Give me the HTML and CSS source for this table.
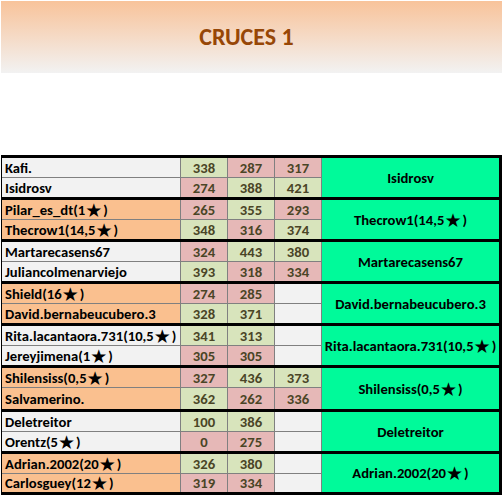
FILE: index.html
```html
<!DOCTYPE html>
<html>
<head>
<meta charset="utf-8">
<link rel="stylesheet" href="styles.css">
</head>
<body>
<div class="header"><h1 class="title">CRUCES 1</h1></div>
<div class="tbl">
  <div class="pair">
    <div class="name gray">Kafi.</div><div class="n g">338</div><div class="n p">287</div><div class="n p">317</div>
    <div class="win">Isidrosv</div>
    <div class="name gray">Isidrosv</div><div class="n p">274</div><div class="n g">388</div><div class="n g">421</div>
  </div>
  <div class="pair">
    <div class="name orange">Pilar_es_dt(1<span class="star">★</span>)</div><div class="n p">265</div><div class="n g">355</div><div class="n p">293</div>
    <div class="win">Thecrow1(14,5<span class="star">★</span>)</div>
    <div class="name orange">Thecrow1(14,5<span class="star">★</span>)</div><div class="n g">348</div><div class="n p">316</div><div class="n g">374</div>
  </div>
  <div class="pair">
    <div class="name gray">Martarecasens67</div><div class="n p">324</div><div class="n g">443</div><div class="n g">380</div>
    <div class="win">Martarecasens67</div>
    <div class="name gray">Juliancolmenarviejo</div><div class="n g">393</div><div class="n p">318</div><div class="n p">334</div>
  </div>
  <div class="pair">
    <div class="name orange">Shield(16<span class="star">★</span>)</div><div class="n p">274</div><div class="n p">285</div><div class="n e"></div>
    <div class="win">David.bernabeucubero.3</div>
    <div class="name orange">David.bernabeucubero.3</div><div class="n g">328</div><div class="n g">371</div><div class="n e"></div>
  </div>
  <div class="pair">
    <div class="name gray">Rita.lacantaora.731(10,5<span class="star">★</span>)</div><div class="n g">341</div><div class="n g">313</div><div class="n e"></div>
    <div class="win">Rita.lacantaora.731(10,5<span class="star">★</span>)</div>
    <div class="name gray">Jereyjimena(1<span class="star">★</span>)</div><div class="n p">305</div><div class="n p">305</div><div class="n e"></div>
  </div>
  <div class="pair tall">
    <div class="name orange">Shilensiss(0,5<span class="star">★</span>)</div><div class="n p">327</div><div class="n g">436</div><div class="n g">373</div>
    <div class="win">Shilensiss(0,5<span class="star">★</span>)</div>
    <div class="name orange">Salvamerino.</div><div class="n g">362</div><div class="n p">262</div><div class="n p">336</div>
  </div>
  <div class="pair">
    <div class="name gray">Deletreitor</div><div class="n g">100</div><div class="n g">386</div><div class="n e"></div>
    <div class="win">Deletreitor</div>
    <div class="name gray">Orentz(5<span class="star">★</span>)</div><div class="n p">0</div><div class="n p">275</div><div class="n e"></div>
  </div>
  <div class="pair short">
    <div class="name orange">Adrian.2002(20<span class="star">★</span>)</div><div class="n g">326</div><div class="n g">380</div><div class="n e"></div>
    <div class="win">Adrian.2002(20<span class="star">★</span>)</div>
    <div class="name orange">Carlosguey(12<span class="star">★</span>)</div><div class="n p">319</div><div class="n p">334</div><div class="n e"></div>
  </div>
</div>
</body>
</html>
```
FILE: styles.css
```css
html, body {
  margin: 0;
  padding: 0;
  background: #ffffff;
}
body {
  font-family: "Carlito", "Open Sans", sans-serif;
  font-weight: bold;
  font-size: 14.67px;
}
.header {
  margin: 1px 0 0 1px;
  height: 72px;
  width: 501px;
  background: linear-gradient(to bottom, #f8c39a 0%, #f2f2f2 100%);
  display: flex;
  align-items: center;
  justify-content: center;
}
.title {
  margin: 0 10px 0 0;
  font-size: 24px;
  font-weight: bold;
  color: #974706;
  line-height: 1;
}
.tbl {
  margin: 82px 0 0 1px;
  width: 497px;
  border-left: 1px solid #000;
  border-right: 3px solid #000;
  border-bottom: 3px solid #000;
}
.pair {
  display: grid;
  grid-template-columns: 178px 46px 46px 46px 177px;
  grid-template-rows: 19px 19px;
  gap: 1px;
  background: #808080;
  border-top: 3px solid #000;
}
.pair.tall { grid-template-rows: 19px 21px; }
.pair.short { grid-template-rows: 19px 18px; }
.name {
  display: flex;
  align-items: center;
  padding-left: 3px;
  color: #000;
  white-space: nowrap;
  line-height: 18px;
}
.gray { background: #f2f2f2; }
.orange { background: #fac08f; }
.n {
  display: flex;
  align-items: center;
  justify-content: center;
  color: #4a4526;
}
.g { background: #d8e4bc; }
.p { background: #e6b8b7; }
.e { background: #f2f2f2; }
.win {
  grid-column: 5;
  grid-row: 1 / span 2;
  background: #00fa9a;
  display: flex;
  align-items: center;
  justify-content: center;
  color: #000;
  white-space: nowrap;
}
.star {
  font-family: "DejaVu Sans", sans-serif;
  font-weight: bold;
  font-size: 19px;
  line-height: 0;
  margin: 0 2px 0 0;
  letter-spacing: -1px;
}
```
